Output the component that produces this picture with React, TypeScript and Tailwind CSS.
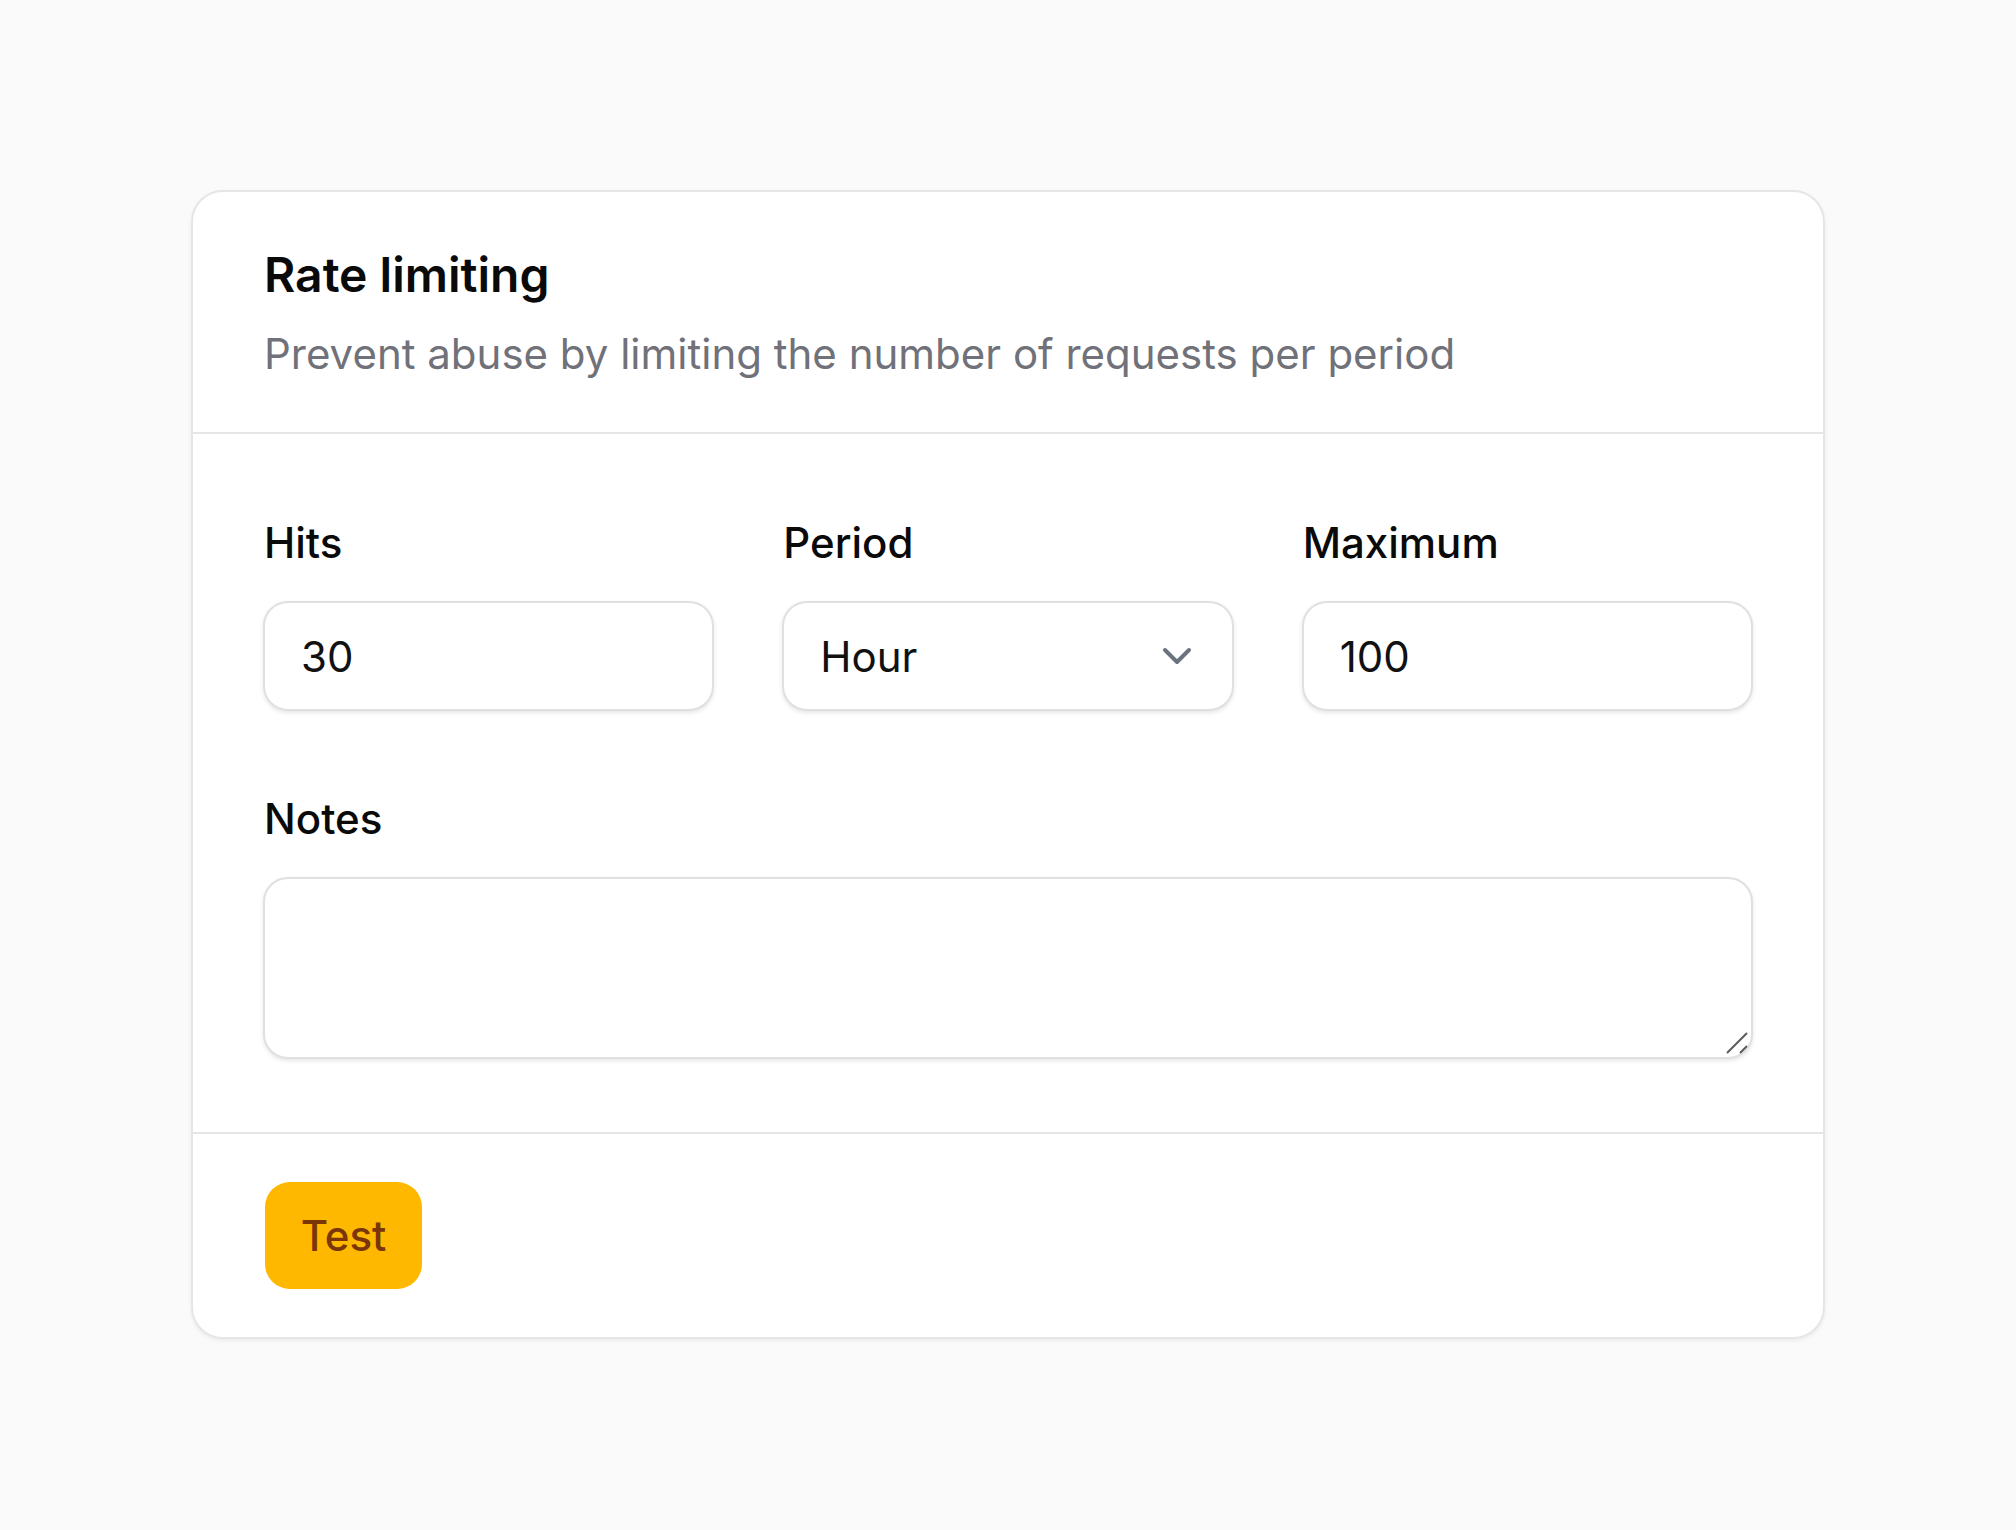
import React from "react";

function ChevronDown() {
  return (
    <svg width="48" height="48" viewBox="0 0 24 24" fill="none" stroke="#6b7280" strokeWidth="2" strokeLinecap="round" strokeLinejoin="round">
      <path d="m6 9 6 6 6-6" />
    </svg>
  );
}

function ResizeGrip() {
  return (
    <svg className="pointer-events-none absolute bottom-[4px] right-[4px]" width="24" height="24" viewBox="0 0 24 24" fill="none" stroke="#5a5a5a" strokeWidth="2" strokeLinecap="butt">
      <path d="M2 22 L22 2" />
      <path d="M15 22 L22 15" />
    </svg>
  );
}

export default function App() {
  const font = { fontFamily: "Inter, 'Noto Sans', sans-serif" };
  const box =
    "rounded-[25px] border-2 border-[#e0e0e0] bg-white shadow-[0_2px_4px_rgba(0,0,0,0.1)]";
  return (
    <div className="min-h-[1530px] w-full bg-[#fafafa] pt-[190px]" style={font}>
      <div className="mx-auto w-[1634px] rounded-[32px] border-2 border-[#e6e6e6] bg-white shadow-[0_2px_4px_rgba(0,0,0,0.06)]">
        <div className="px-[71px] pt-[54px] pb-[53px]">
          <h1 className="text-[48px] leading-[58px] font-semibold text-[#0a0a0a]">Rate limiting</h1>
          <p className="mt-[25px] text-[42px] leading-[50px] text-[#71717a]">
            Prevent abuse by limiting the number of requests per period
          </p>
        </div>
        <div className="border-t-2 border-[#e6e6e6] px-[70px] pt-[84px] pb-[73px]">
          <div className="grid grid-cols-3 gap-x-[68px]">
            <div className="flex flex-col">
              <label className="h-[50px] pl-[1px] text-[42px] leading-[50px] font-medium text-[#0a0a0a]">Hits</label>
              <div className={`mt-[33px] flex h-[110px] items-center px-[36px] text-[42px] text-[#111] ${box}`}>
                30
              </div>
            </div>
            <div className="flex flex-col">
              <label className="h-[50px] pl-[1px] text-[42px] leading-[50px] font-medium text-[#0a0a0a]">Period</label>
              <div className={`mt-[33px] flex h-[110px] items-center justify-between pl-[36px] pr-[31px] text-[42px] text-[#111] ${box}`}>
                <span>Hour</span>
                <ChevronDown />
              </div>
            </div>
            <div className="flex flex-col">
              <label className="h-[50px] pl-[1px] text-[42px] leading-[50px] font-medium text-[#0a0a0a]">Maximum</label>
              <div className={`mt-[33px] flex h-[110px] items-center px-[36px] text-[42px] text-[#111] ${box}`}>
                100
              </div>
            </div>
          </div>
          <div className="mt-[83px] flex flex-col">
            <label className="h-[50px] pl-[1px] text-[42px] leading-[50px] font-medium text-[#0a0a0a]">Notes</label>
            <div className="relative mt-[33px]">
              <textarea
                className={`block h-[182px] w-full resize-none px-[36px] py-[20px] text-[42px] text-[#111] outline-none ${box}`}
                style={font}
              />
              <ResizeGrip />
            </div>
          </div>
        </div>
        <div className="border-t-2 border-[#e6e6e6] px-[72px] pt-[48px] pb-[48px]">
          <button className="flex h-[107px] w-[157px] items-center justify-center rounded-[25px] bg-[#ffb800] text-[42px] font-medium text-[#7a3608]" style={font}>
            Test
          </button>
        </div>
      </div>
    </div>
  );
}
